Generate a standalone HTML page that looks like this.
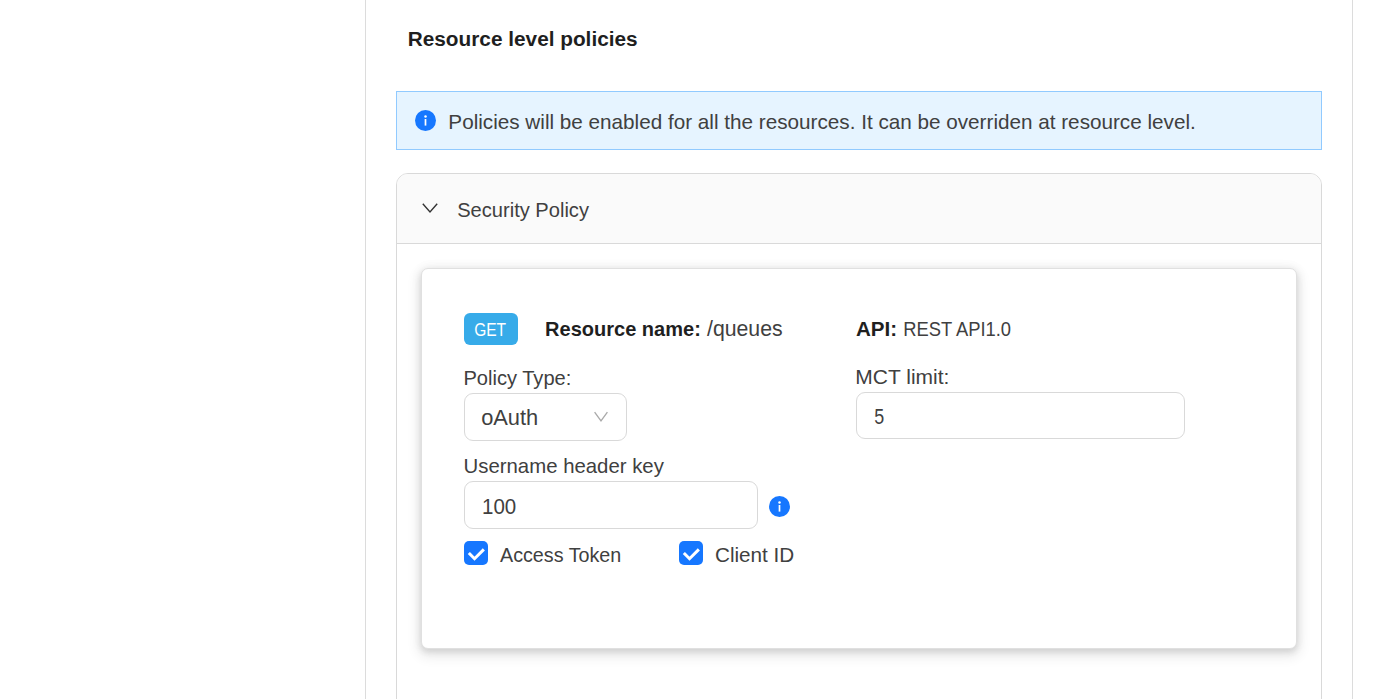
<!DOCTYPE html>
<html><head><meta charset="utf-8"><style>
html,body{margin:0;padding:0;}
body{width:1375px;height:699px;overflow:hidden;position:relative;background:#fff;font-family:"Liberation Sans",sans-serif;}
.abs,.t{position:absolute;}
.t{white-space:nowrap;}
.vl{position:absolute;top:0;width:1px;height:699px;background:#dcdcdc;}
.alert{position:absolute;left:396px;top:91px;width:924px;height:57px;border:1px solid #91caff;background:#e6f4ff;}
.coll{position:absolute;left:396px;top:173px;width:924px;height:700px;border:1px solid #d9d9d9;border-radius:12px 12px 0 0;background:#fff;}
.chead{position:absolute;left:0;top:0;width:924px;height:69px;background:#fafafa;border-bottom:1px solid #d9d9d9;border-radius:11px 11px 0 0;}
.card{position:absolute;left:421px;top:268px;width:876px;height:381px;box-sizing:border-box;border:1px solid #e0e0e0;background:#fff;border-radius:7px;box-shadow:0 0 12px 1px rgba(0,0,0,0.045),0 3px 6px 0 rgba(0,0,0,0.10),0 5px 12px 4px rgba(0,0,0,0.07);}
.tag{position:absolute;left:464px;top:313px;width:54px;height:32px;border-radius:6px;background:#37abe9;}
.inp{position:absolute;border:1px solid #d9d9d9;border-radius:9px;background:#fff;box-sizing:border-box;}
.cb{position:absolute;top:541px;width:24px;height:24px;border-radius:5px;background:#1677ff;}
.cb svg{position:absolute;left:0;top:0;}
</style></head><body>
<div class="vl" style="left:365px"></div>
<div class="vl" style="left:1352px"></div>
<div class="alert"></div>
<svg class="abs" style="left:415.0px;top:110.0px" width="21" height="21" viewBox="0 0 21 21"><circle cx="10.5" cy="10.5" r="10.5" fill="#1677ff"/><circle cx="10.5" cy="6.6" r="1.25" fill="#fff"/><rect x="9.65" y="9.0" width="1.7" height="6.6" fill="#fff"/></svg>
<div class="coll"><div class="chead"></div></div>
<svg class="abs" style="left:420px;top:200px" width="20" height="16" viewBox="0 0 20 16"><path d="M2.8 3.8 L10 11.9 L17.2 3.8" fill="none" stroke="#333" stroke-width="1.4"/></svg>
<div class="card"></div>
<div class="tag"></div>
<div class="inp" style="left:464px;top:393px;width:163px;height:48px;"></div>
<svg class="abs" style="left:592px;top:409px" width="18" height="15" viewBox="0 0 18 15"><path d="M2.6 3.1 L9 11.9 L15.4 3.1" fill="none" stroke="#aaa" stroke-width="1.35"/></svg>
<div class="inp" style="left:856px;top:392px;width:329px;height:47px;"></div>
<div class="inp" style="left:464px;top:481px;width:294px;height:48px;"></div>
<svg class="abs" style="left:769.0px;top:496.0px" width="21" height="21" viewBox="0 0 21 21"><circle cx="10.5" cy="10.5" r="10.5" fill="#1677ff"/><circle cx="10.5" cy="6.6" r="1.25" fill="#fff"/><rect x="9.65" y="9.0" width="1.7" height="6.6" fill="#fff"/></svg>
<div class="cb" style="left:464px"><svg width="24" height="24" viewBox="0 0 24 24"><path d="M5.9 13.1 L10.5 17.7 L18.8 9.4" fill="none" stroke="#fff" stroke-width="3" stroke-linecap="square"/></svg></div>
<div class="cb" style="left:679px"><svg width="24" height="24" viewBox="0 0 24 24"><path d="M5.9 13.1 L10.5 17.7 L18.8 9.4" fill="none" stroke="#fff" stroke-width="3" stroke-linecap="square"/></svg></div>
<div class="t" style="left:407.75px;top:27.00px;font-size:20.79px;line-height:23px;color:#1f1f1f;font-weight:bold;">Resource level policies</div>
<div class="t" style="left:448.34px;top:110.00px;font-size:20.69px;line-height:23px;color:#404040;">Policies will be enabled for all the resources. It can be overriden at resource level.</div>
<div class="t" style="left:457.20px;top:199.00px;font-size:20.10px;line-height:22px;color:#404040;">Security Policy</div>
<div class="t" style="left:474.47px;top:319.00px;font-size:18.50px;line-height:21px;color:#ffffff;transform:scaleX(0.8388);transform-origin:0.93px 0;">GET</div>
<div class="t" style="left:545.34px;top:317.00px;font-size:21.00px;line-height:23px;color:#1f1f1f;font-weight:bold;transform:scaleX(0.9533);transform-origin:1.26px 0;">Resource name:</div>
<div class="t" style="left:707.00px;top:317.00px;font-size:21.25px;line-height:24px;color:#404040;">/queues</div>
<div class="t" style="left:856.08px;top:317.00px;font-size:21.00px;line-height:23px;color:#1f1f1f;font-weight:bold;transform:scaleX(0.9791);transform-origin:0.42px 0;">API:</div>
<div class="t" style="left:903.32px;top:317.00px;font-size:21.00px;line-height:23px;color:#404040;transform:scaleX(0.8739);transform-origin:1.68px 0;">REST API1.0</div>
<div class="t" style="left:463.39px;top:367.00px;font-size:20.10px;line-height:22px;color:#404040;">Policy Type:</div>
<div class="t" style="left:481.13px;top:405.00px;font-size:21.85px;line-height:25px;color:#404040;">oAuth</div>
<div class="t" style="left:855.32px;top:365.00px;font-size:21.01px;line-height:23px;color:#404040;">MCT limit:</div>
<div class="t" style="left:874.14px;top:405.00px;font-size:21.50px;line-height:24px;color:#404040;transform:scaleX(0.8333);transform-origin:0.86px 0;">5</div>
<div class="t" style="left:463.57px;top:455.00px;font-size:20.37px;line-height:22px;color:#404040;">Username header key</div>
<div class="t" style="left:481.50px;top:495.00px;font-size:21.50px;line-height:24px;color:#404040;transform:scaleX(0.9527);transform-origin:1.50px 0;">100</div>
<div class="t" style="left:500.00px;top:544.00px;font-size:19.73px;line-height:22px;color:#404040;">Access Token</div>
<div class="t" style="left:714.97px;top:543.00px;font-size:20.68px;line-height:23px;color:#404040;">Client ID</div>
</body></html>
